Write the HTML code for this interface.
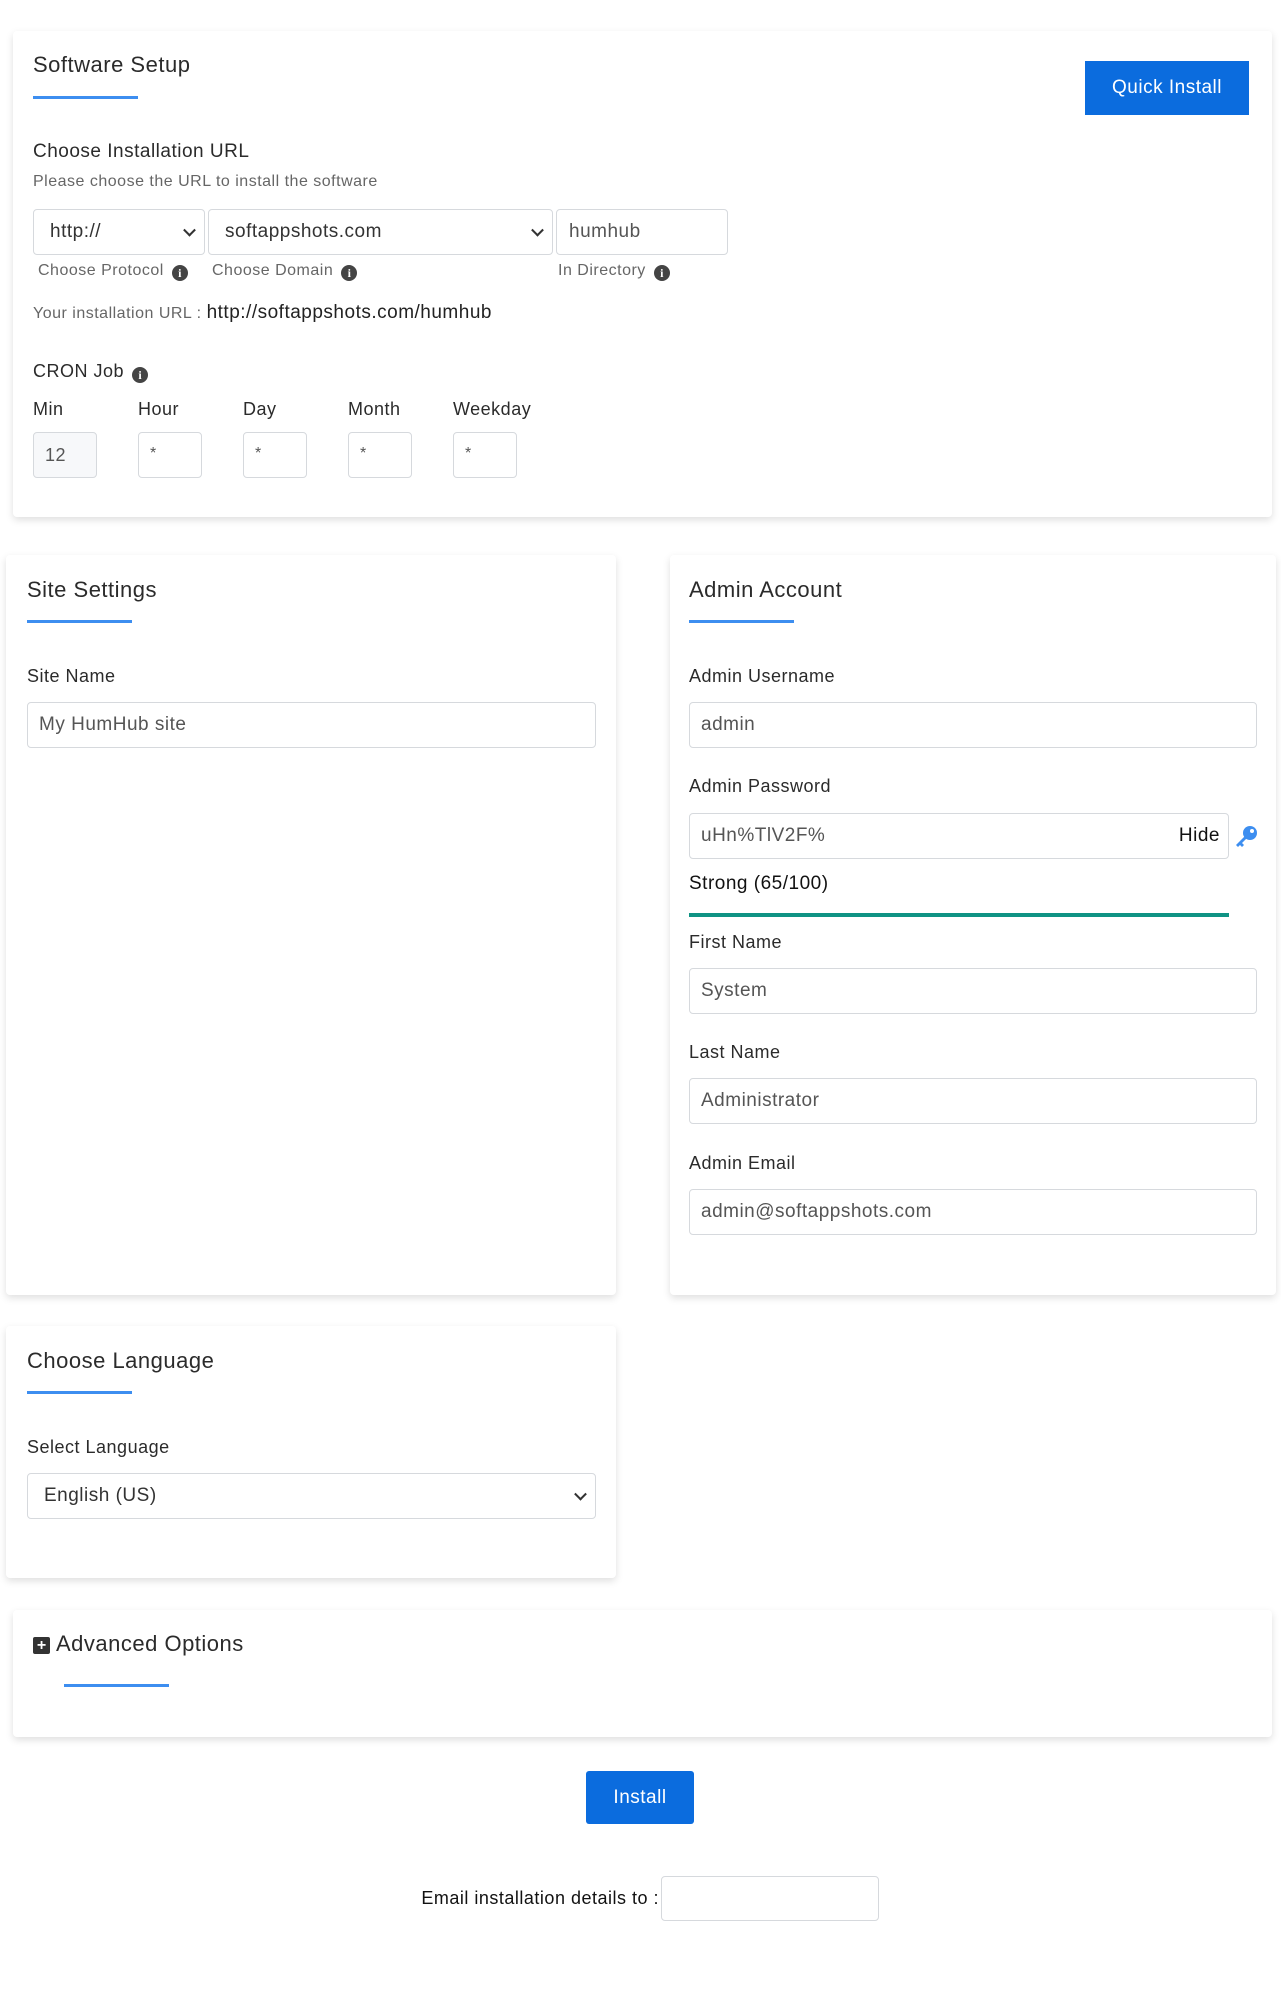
<!DOCTYPE html>
<html><head><meta charset="utf-8"><style>
*{box-sizing:border-box;margin:0;padding:0}
body{width:1281px;height:2000px;background:#fff;font-family:"Liberation Sans",sans-serif;color:#222;position:relative;overflow:hidden;letter-spacing:0.5px}
.a{position:absolute;white-space:nowrap}
.card{position:absolute;background:#fff;border-radius:4px;box-shadow:0 3px 8px rgba(0,0,0,.13)}
.t{font-size:22px;color:#2b2b2b}
.ul{position:absolute;height:3px;background:#3d8ef0;width:105px}
.lbl{font-size:18px;color:#2b2b2b}
.inp{position:absolute;border:1px solid #d6d9dd;border-radius:4px;background:#fff;font-size:19px;color:#555;padding-left:11px;display:flex;align-items:center}
.sel::after{content:"";position:absolute;right:10px;top:50%;width:7px;height:7px;border-right:2px solid #333;border-bottom:2px solid #333;transform:translateY(-70%) rotate(45deg)}
.i{display:inline-block;width:16px;height:16px;border-radius:50%;background:#444;color:#fff;font-size:12px;font-weight:bold;text-align:center;line-height:16px;vertical-align:-2px;margin-left:8px;font-family:"Liberation Serif",serif;letter-spacing:0}
.sm{font-size:16px;color:#666}
</style></head><body>

<div class="card" style="left:13px;top:31px;width:1259px;height:486px"></div>
<div class="a t" style="left:33px;top:52px">Software Setup</div>
<div class="ul" style="left:33px;top:96px"></div>
<div class="a" style="left:1085px;top:61px;width:164px;height:54px;background:#0b6cde;color:#fff;font-size:19px;display:flex;align-items:center;justify-content:center">Quick Install</div>
<div class="a lbl" style="left:33px;top:141px;font-size:19px">Choose Installation URL</div>
<div class="a sm" style="left:33px;top:173px">Please choose the URL to install the software</div>
<div class="inp sel" style="left:33px;top:209px;width:172px;height:46px;color:#333;padding-left:16px">http://</div>
<div class="inp sel" style="left:208px;top:209px;width:345px;height:46px;color:#333;padding-left:16px">softappshots.com</div>
<div class="inp" style="left:556px;top:209px;width:172px;height:46px;padding-left:12px">humhub</div>
<div class="a sm" style="left:38px;top:262px">Choose Protocol<span class="i">i</span></div>
<div class="a sm" style="left:212px;top:262px">Choose Domain<span class="i">i</span></div>
<div class="a sm" style="left:558px;top:262px">In Directory<span class="i">i</span></div>
<div class="a" style="left:33px;top:302px;font-size:16px;color:#666">Your installation URL : <span style="font-size:19px;color:#222">http://softappshots.com/humhub</span></div>
<div class="a lbl" style="left:33px;top:361px">CRON Job<span class="i">i</span></div>
<div class="a lbl" style="left:33px;top:399px">Min</div>
<div class="a lbl" style="left:138px;top:399px">Hour</div>
<div class="a lbl" style="left:243px;top:399px">Day</div>
<div class="a lbl" style="left:348px;top:399px">Month</div>
<div class="a lbl" style="left:453px;top:399px">Weekday</div>
<div class="inp" style="left:33px;top:432px;width:64px;height:46px;background:#f7f8fa;font-size:18px">12</div>
<div class="inp" style="left:138px;top:432px;width:64px;height:46px;align-items:flex-start;padding-top:12px;font-size:16px">*</div>
<div class="inp" style="left:243px;top:432px;width:64px;height:46px;align-items:flex-start;padding-top:12px;font-size:16px">*</div>
<div class="inp" style="left:348px;top:432px;width:64px;height:46px;align-items:flex-start;padding-top:12px;font-size:16px">*</div>
<div class="inp" style="left:453px;top:432px;width:64px;height:46px;align-items:flex-start;padding-top:12px;font-size:16px">*</div>

<div class="card" style="left:6px;top:555px;width:610px;height:740px"></div>
<div class="a t" style="left:27px;top:577px">Site Settings</div>
<div class="ul" style="left:27px;top:620px"></div>
<div class="a lbl" style="left:27px;top:666px">Site Name</div>
<div class="inp" style="left:27px;top:702px;width:569px;height:46px">My HumHub site</div>

<div class="card" style="left:670px;top:555px;width:606px;height:740px"></div>
<div class="a t" style="left:689px;top:577px">Admin Account</div>
<div class="ul" style="left:689px;top:620px"></div>
<div class="a lbl" style="left:689px;top:666px">Admin Username</div>
<div class="inp" style="left:689px;top:702px;width:568px;height:46px">admin</div>
<div class="a lbl" style="left:689px;top:776px">Admin Password</div>
<div class="inp" style="left:689px;top:813px;width:540px;height:46px">uHn%TlV2F%<span style="position:absolute;right:8px;color:#111">Hide</span></div>
<svg class="a" style="left:1233px;top:825px" width="26" height="24" viewBox="0 0 26 24"><circle cx="17" cy="8" r="7" fill="#3d8ef0"/><circle cx="19" cy="6" r="2" fill="#fff"/><path d="M12 11 L3 20 L5 22 L7 20 L9 22 L11 20 L9 18 L14 13Z" fill="#3d8ef0"/></svg>
<div class="a" style="left:689px;top:873px;font-size:19px;color:#111">Strong (65/100)</div>
<div class="a" style="left:689px;top:913px;width:540px;height:4px;background:#0f9384"></div>
<div class="a lbl" style="left:689px;top:932px">First Name</div>
<div class="inp" style="left:689px;top:968px;width:568px;height:46px">System</div>
<div class="a lbl" style="left:689px;top:1042px">Last Name</div>
<div class="inp" style="left:689px;top:1078px;width:568px;height:46px">Administrator</div>
<div class="a lbl" style="left:689px;top:1153px">Admin Email</div>
<div class="inp" style="left:689px;top:1189px;width:568px;height:46px">admin@softappshots.com</div>

<div class="card" style="left:6px;top:1326px;width:610px;height:252px"></div>
<div class="a t" style="left:27px;top:1348px">Choose Language</div>
<div class="ul" style="left:27px;top:1391px"></div>
<div class="a lbl" style="left:27px;top:1437px">Select Language</div>
<div class="inp sel" style="left:27px;top:1473px;width:569px;height:46px;color:#333;padding-left:16px">English (US)</div>

<div class="card" style="left:13px;top:1610px;width:1259px;height:127px"></div>
<div class="a t" style="left:33px;top:1631px"><span style="display:inline-block;width:17px;height:17px;background:#333;border-radius:2px;color:#fff;font-size:16px;line-height:17px;text-align:center;font-weight:bold;vertical-align:1px;margin-right:6px;letter-spacing:0">+</span>Advanced Options</div>
<div class="ul" style="left:64px;top:1684px"></div>

<div class="a" style="left:586px;top:1771px;width:108px;height:53px;background:#0b6cde;color:#fff;font-size:19px;border-radius:3px;display:flex;align-items:center;justify-content:center">Install</div>
<div class="a lbl" style="right:622px;top:1888px;color:#111">Email installation details to :</div>
<div class="inp" style="left:661px;top:1876px;width:218px;height:45px"></div>
</body></html>
